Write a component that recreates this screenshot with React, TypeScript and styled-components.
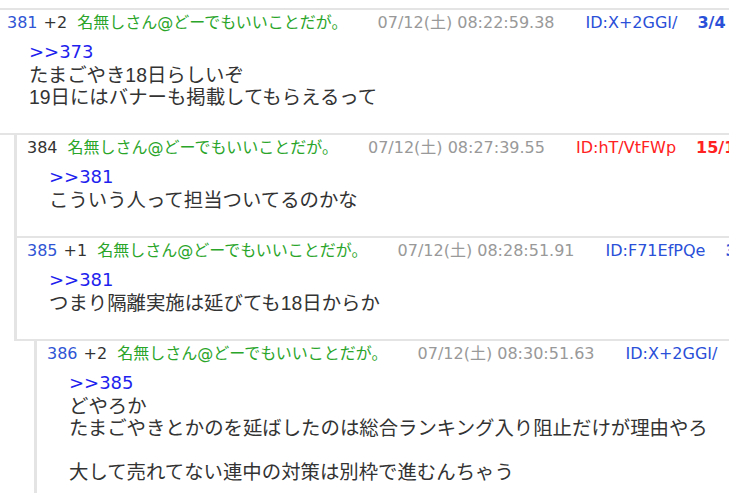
import React from "react";
import styled, { createGlobalStyle } from "styled-components";

type PostData = {
  no: number;
  votes?: number;
  name: string;
  date: string;
  id: string;
  hot?: boolean;
  count: string;
  depth: number;
  anchor: string;
  lines: string[];
};

const NAME = "名無しさん@どーでもいいことだが。";

const posts: PostData[] = [
  {
    no: 381,
    votes: 2,
    name: NAME,
    date: "07/12(土) 08:22:59.38",
    id: "ID:X+2GGI/",
    count: "3/4",
    depth: 0,
    anchor: ">>373",
    lines: ["たまごやき18日らしいぞ", "19日にはバナーも掲載してもらえるって"],
  },
  {
    no: 384,
    name: NAME,
    date: "07/12(土) 08:27:39.55",
    id: "ID:hT/VtFWp",
    hot: true,
    count: "15/17",
    depth: 1,
    anchor: ">>381",
    lines: ["こういう人って担当ついてるのかな"],
  },
  {
    no: 385,
    votes: 1,
    name: NAME,
    date: "07/12(土) 08:28:51.91",
    id: "ID:F71EfPQe",
    count: "3/3",
    depth: 1,
    anchor: ">>381",
    lines: ["つまり隔離実施は延びても18日からか"],
  },
  {
    no: 386,
    votes: 2,
    name: NAME,
    date: "07/12(土) 08:30:51.63",
    id: "ID:X+2GGI/",
    count: "4/4",
    depth: 2,
    anchor: ">>385",
    lines: [
      "どやろか",
      "たまごやきとかのを延ばしたのは総合ランキング入り阻止だけが理由やろ",
      "",
      "大して売れてない連中の対策は別枠で進むんちゃう",
    ],
  },
];

const indent = [0, 14, 34];

const GlobalStyle = createGlobalStyle`
  html, body {
    margin: 0;
    padding: 0;
    background: #fff;
    overflow: hidden;
  }
  body {
    font-family: "DejaVu Sans", "Noto Sans CJK JP", sans-serif;
    color: #333;
  }
`;

const Thread = styled.div`
  margin-top: 8px;
  border-top: 2px solid #e4e4e4;
  width: 100%;
`;

const PostBox = styled.div<{ $depth: number }>`
  margin-left: ${({ $depth }) => indent[$depth]}px;
  border-left: ${({ $depth }) => ($depth > 0 ? "3px solid #e4e4e4" : "none")};
  border-bottom: 2px solid #e4e4e4;
  padding: 2px 0 25px ${({ $depth }) => ($depth > 0 ? 10 : 7)}px;
`;

const Header = styled.div`
  display: flex;
  align-items: baseline;
  white-space: nowrap;
  font-family: "DejaVu Sans", "Noto Sans CJK JP", sans-serif;
  font-size: 16px;
  line-height: 22px;
`;

const Num = styled.span<{ $linked: boolean }>`
  color: ${({ $linked }) => ($linked ? "#2f55d4" : "#333")};
  margin-right: 6px;
`;

const Votes = styled.span`
  color: #333;
  margin-right: 6px;
`;

const Name = styled.span`
  color: #2aa52a;
  margin-left: 4px;
  margin-right: 30px;
`;

const DateText = styled.span`
  color: #999;
  margin-right: 31px;
`;

const Id = styled.span<{ $hot?: boolean }>`
  color: ${({ $hot }) => ($hot ? "#ff2222" : "#2a4fd8")};
  margin-right: 20px;
`;

const Count = styled.span<{ $hot?: boolean }>`
  color: ${({ $hot }) => ($hot ? "#ff2222" : "#2a4fd8")};
  font-weight: 700;
`;

const Body = styled.div`
  margin: 7px 0 0 22px;
  white-space: nowrap;
`;

const Anchor = styled.a`
  display: block;
  color: #1f1fee;
  text-decoration: none;
  font-family: "DejaVu Sans", sans-serif;
  font-size: 18px;
  line-height: 22px;
`;

const Text = styled.div`
  padding-top: 1px;
  font-family: "Liberation Sans", "Noto Sans CJK JP", sans-serif;
  font-size: 19.4px;
  line-height: 22px;
`;

const Line = styled.div`
  min-height: 22px;
`;

const Post: React.FC<{ post: PostData }> = ({ post }) => (
  <PostBox $depth={post.depth}>
    <Header>
      <Num $linked={post.votes !== undefined}>{post.no}</Num>
      {post.votes !== undefined && <Votes>+{post.votes}</Votes>}
      <Name>{post.name}</Name>
      <DateText>{post.date}</DateText>
      <Id $hot={post.hot}>{post.id}</Id>
      <Count $hot={post.hot}>{post.count}</Count>
    </Header>
    <Body>
      <Anchor href="#">{post.anchor}</Anchor>
      <Text>
        {post.lines.map((l, i) => (
          <Line key={i}>{l}</Line>
        ))}
      </Text>
    </Body>
  </PostBox>
);

const App: React.FC = () => (
  <>
    <GlobalStyle />
    <Thread>
      {posts.map((p) => (
        <Post key={p.no} post={p} />
      ))}
    </Thread>
  </>
);

export default App;
